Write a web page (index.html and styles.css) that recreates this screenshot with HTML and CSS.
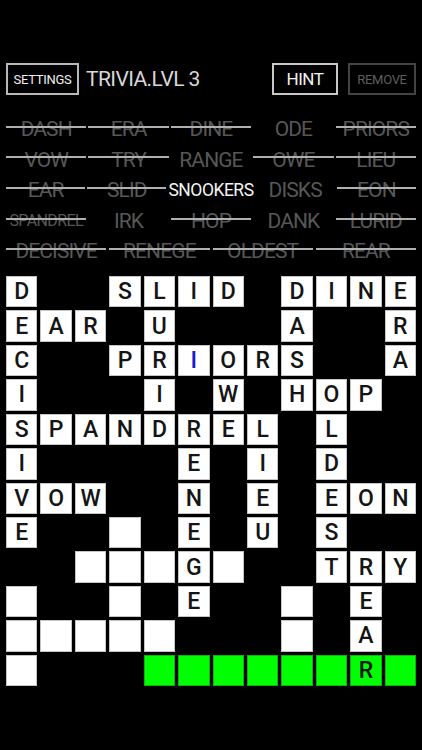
FILE: index.html
```html
<!DOCTYPE html>
<html>
<head>
<meta charset="utf-8">
<link rel="stylesheet" href="styles.css">
</head>
<body>
<div class="top">
  <div class="btn settings">SETTINGS</div>
  <div class="title">TRIVIA.LVL 3</div>
  <div class="btn hint">HINT</div>
  <div class="btn remove">REMOVE</div>
</div>

<div class="words">
  <div class="wrow">
    <div class="word done">DASH</div>
    <div class="word done">ERA</div>
    <div class="word done">DINE</div>
    <div class="word">ODE</div>
    <div class="word done">PRIORS</div>
  </div>
  <div class="wrow">
    <div class="word done">VOW</div>
    <div class="word done">TRY</div>
    <div class="word">RANGE</div>
    <div class="word done">OWE</div>
    <div class="word done">LIEU</div>
  </div>
  <div class="wrow">
    <div class="word done">EAR</div>
    <div class="word done">SLID</div>
    <div class="word active">SNOOKERS</div>
    <div class="word">DISKS</div>
    <div class="word done">EON</div>
  </div>
  <div class="wrow">
    <div class="word done small">SPANDREL</div>
    <div class="word">IRK</div>
    <div class="word done">HOP</div>
    <div class="word">DANK</div>
    <div class="word done">LURID</div>
  </div>
  <div class="wrow four">
    <div class="word done">DECISIVE</div>
    <div class="word done">RENEGE</div>
    <div class="word done">OLDEST</div>
    <div class="word done">REAR</div>
  </div>
</div>

<div class="board">
  <!-- row 0 -->
  <div class="w">D</div><div class="b"></div><div class="b"></div><div class="w">S</div><div class="w">L</div><div class="w">I</div><div class="w">D</div><div class="b"></div><div class="w">D</div><div class="w">I</div><div class="w">N</div><div class="w">E</div>
  <!-- row 1 -->
  <div class="w">E</div><div class="w">A</div><div class="w">R</div><div class="b"></div><div class="w">U</div><div class="b"></div><div class="b"></div><div class="b"></div><div class="w">A</div><div class="b"></div><div class="b"></div><div class="w">R</div>
  <!-- row 2 -->
  <div class="w">C</div><div class="b"></div><div class="b"></div><div class="w">P</div><div class="w">R</div><div class="w hl">I</div><div class="w">O</div><div class="w">R</div><div class="w">S</div><div class="b"></div><div class="b"></div><div class="w">A</div>
  <!-- row 3 -->
  <div class="w">I</div><div class="b"></div><div class="b"></div><div class="b"></div><div class="w">I</div><div class="b"></div><div class="w">W</div><div class="b"></div><div class="w">H</div><div class="w">O</div><div class="w">P</div><div class="b"></div>
  <!-- row 4 -->
  <div class="w">S</div><div class="w">P</div><div class="w">A</div><div class="w">N</div><div class="w">D</div><div class="w">R</div><div class="w">E</div><div class="w">L</div><div class="b"></div><div class="w">L</div><div class="b"></div><div class="b"></div>
  <!-- row 5 -->
  <div class="w">I</div><div class="b"></div><div class="b"></div><div class="b"></div><div class="b"></div><div class="w">E</div><div class="b"></div><div class="w">I</div><div class="b"></div><div class="w">D</div><div class="b"></div><div class="b"></div>
  <!-- row 6 -->
  <div class="w">V</div><div class="w">O</div><div class="w">W</div><div class="b"></div><div class="b"></div><div class="w">N</div><div class="b"></div><div class="w">E</div><div class="b"></div><div class="w">E</div><div class="w">O</div><div class="w">N</div>
  <!-- row 7 -->
  <div class="w">E</div><div class="b"></div><div class="b"></div><div class="w"></div><div class="b"></div><div class="w">E</div><div class="b"></div><div class="w">U</div><div class="b"></div><div class="w">S</div><div class="b"></div><div class="b"></div>
  <!-- row 8 -->
  <div class="b"></div><div class="b"></div><div class="w"></div><div class="w"></div><div class="w"></div><div class="w">G</div><div class="w"></div><div class="b"></div><div class="b"></div><div class="w">T</div><div class="w">R</div><div class="w">Y</div>
  <!-- row 9 -->
  <div class="w"></div><div class="b"></div><div class="b"></div><div class="w"></div><div class="b"></div><div class="w">E</div><div class="b"></div><div class="b"></div><div class="w"></div><div class="b"></div><div class="w">E</div><div class="b"></div>
  <!-- row 10 -->
  <div class="w"></div><div class="w"></div><div class="w"></div><div class="w"></div><div class="w"></div><div class="b"></div><div class="b"></div><div class="b"></div><div class="w"></div><div class="b"></div><div class="w">A</div><div class="b"></div>
  <!-- row 11 -->
  <div class="w"></div><div class="b"></div><div class="b"></div><div class="b"></div><div class="g"></div><div class="g"></div><div class="g"></div><div class="g"></div><div class="g"></div><div class="g"></div><div class="g">R</div><div class="g"></div>
</div>
</body>
</html>
```

FILE: styles.css
```css
html, body {
  margin: 0;
  padding: 0;
  background: #000;
}
body {
  width: 422px;
  height: 750px;
  font-family: Roboto, "Noto Sans", "Liberation Sans", sans-serif;
  overflow: hidden;
}

.top {
  display: flex;
  align-items: center;
  padding: 63px 6px 0 6px;
  height: 32px;
}
.btn {
  box-sizing: border-box;
  height: 32px;
  display: flex;
  align-items: center;
  justify-content: center;
  border: 2px solid #b8b8b8;
}
.settings {
  width: 73px;
  font-size: 13px;
  color: #eee;
  letter-spacing: -0.3px;
}
.title {
  margin-left: 7px;
  font-size: 21px;
  color: #d8d8d8;
  letter-spacing: -0.6px;
  flex: 1;
}
.hint {
  width: 66px;
  font-size: 17px;
  color: #f2f2f2;
  letter-spacing: -0.4px;
  border-color: #c8c8c8;
}
.remove {
  width: 68px;
  margin-left: 10px;
  font-size: 13px;
  color: #5e5e5e;
  border-color: #444;
  letter-spacing: -0.3px;
}

.words {
  margin: 19px 6px 0 6px;
  width: 410px;
}
.wrow {
  display: grid;
  grid-template-columns: repeat(5, 1fr);
  column-gap: 2px;
  height: 30.6px;
}
.wrow.four {
  grid-template-columns: repeat(4, 1fr);
  column-gap: 3px;
}
.word {
  position: relative;
  text-align: center;
  line-height: 30.6px;
  font-size: 21px;
  color: #575757;
  letter-spacing: -0.9px;
  white-space: nowrap;
}
.word.small {
  font-size: 16px;
  letter-spacing: -0.6px;
}
.word.active {
  color: #f4f4f4;
  font-size: 17.5px;
  letter-spacing: -0.5px;
}
.word.done::after {
  content: "";
  position: absolute;
  left: 0;
  right: 0;
  top: calc(50% - 3.5px);
  height: 2px;
  background: #b0b0b0;
}

.board {
  margin: 9px 6px 0 6px;
  width: 410px;
  display: grid;
  grid-template-columns: repeat(12, 1fr);
  gap: 3px;
}
.board > div {
  box-sizing: border-box;
  aspect-ratio: 1 / 1;
  display: flex;
  align-items: center;
  justify-content: center;
  font-size: 23px;
  font-weight: 500;
  color: #151515;
}
.board .w {
  background: #fff;
  border: 1px solid #c4c4c4;
}
.board .b {
  background: transparent;
}
.board .g {
  background: #00ff00;
  border: 1px solid #08b808;
}
.board .hl {
  color: #1a1ad6;
}
```
